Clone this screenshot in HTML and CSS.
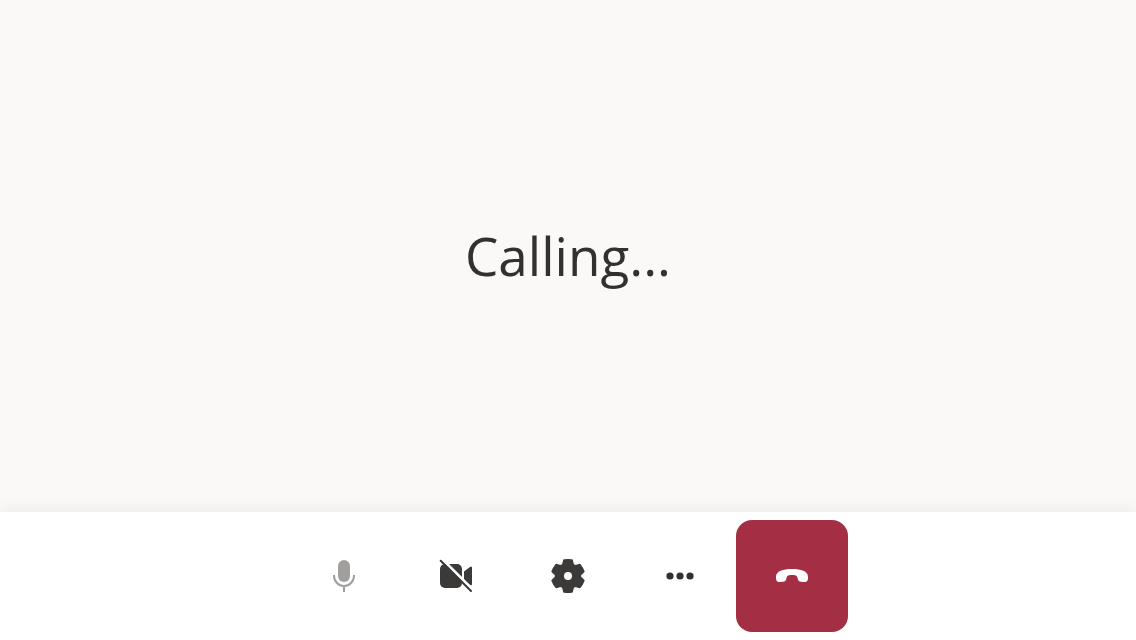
FILE: index.html
```html
<!DOCTYPE html>
<html lang="en">
<head>
<meta charset="utf-8">
<title>Calling</title>
<link rel="stylesheet" href="styles.css">
</head>
<body>
<main class="stage">
  <h1 class="status">Calling...</h1>
</main>
<footer class="controls">
  <button class="control" type="button" aria-label="Microphone" disabled>
    <svg class="icon" viewBox="0 0 48 48"><rect x="18" y="8" width="12" height="22" rx="6" fill="currentColor"/><path d="M14 23v1a10 10 0 0 0 20 0v-1M24 34v6" fill="none" stroke="currentColor" stroke-width="2"/></svg>
  </button>
  <button class="control" type="button" aria-label="Turn camera on">
    <svg class="icon" viewBox="0 0 48 48"><rect x="8" y="12" width="22" height="24" rx="5" fill="currentColor"/><path d="M32 19.5l6-4.600q2-1 2 1v16.200q0 2-2 1l-6-4.600z" fill="currentColor"/><path d="M9.500 6.500l32 32" stroke="#fff" stroke-width="3"/><path d="M8.700 8.700l30.300 30.300" stroke="currentColor" stroke-width="2" stroke-linecap="round"/></svg>
  </button>
  <button class="control" type="button" aria-label="Settings">
    <svg class="icon" viewBox="0 0 48 48">
      <defs><path id="tooth" d="M-6.800-11Q-5.900-11.500-5.600-12.800L-4.900-16Q-4.700-16.700-4-16.800Q0-17.400 4-16.800Q4.700-16.700 4.900-16L5.600-12.800Q5.900-11.500 6.800-11L0 0z"/></defs>
      <g transform="translate(24 24)" fill="currentColor"><circle r="12.400"/><use href="#tooth"/><use href="#tooth" transform="rotate(60)"/><use href="#tooth" transform="rotate(120)"/><use href="#tooth" transform="rotate(180)"/><use href="#tooth" transform="rotate(240)"/><use href="#tooth" transform="rotate(300)"/><circle r="4" fill="#fff"/></g>
    </svg>
  </button>
  <button class="control" type="button" aria-label="More options">
    <svg class="icon icon-more" viewBox="0 0 48 48" fill="currentColor"><circle cx="14" cy="24" r="3.600"/><circle cx="24" cy="24" r="3.600"/><circle cx="34" cy="24" r="3.600"/></svg>
  </button>
  <button class="control hang-up" type="button" aria-label="Leave call">
    <svg class="icon" viewBox="0 0 48 48"><path d="M8 24.500C8 19.300 15 17 24 17s16 2.300 16 7.500v1.700c0 2.500-1.300 3.900-3.400 3.700l-3.900-.2c-1.500-.2-2.300-.9-2.700-2.300l-.8-2.500c-.2-.8-.6-1.300-1.400-1.500-2.400-.6-5.200-.6-7.600 0-.8.2-1.200.7-1.400 1.500L18 27.400c-.4 1.400-1.200 2.100-2.700 2.300l-3.900.2C9.300 30.100 8 28.700 8 26.200z" fill="currentColor"/></svg>
  </button>
</footer>
</body>
</html>
```
FILE: styles.css
```css
* {
  box-sizing: border-box;
}

body {
  margin: 0;
  min-height: 100vh;
  display: flex;
  flex-direction: column;
  background: #faf9f8;
  color: #323130;
  font-family: "Segoe UI", "Open Sans", "Noto Sans", sans-serif;
}

.stage {
  flex: 1;
  display: flex;
  align-items: center;
  justify-content: center;
}

.status {
  margin: 0;
  font-size: 53px;
  line-height: 72px;
  font-weight: 400;
}

.controls {
  display: flex;
  justify-content: center;
  padding: 8px;
  background: #fff;
  box-shadow: 0 0 16px rgba(0, 0, 0, 0.08);
}

.control {
  display: flex;
  align-items: center;
  justify-content: center;
  width: 112px;
  height: 112px;
  padding: 0;
  border: 0;
  border-radius: 16px;
  background: transparent;
  color: #3b3a39;
}

.control:disabled {
  color: #a19f9d;
}

.hang-up {
  background: #a42e43;
  color: #fff;
}

.icon {
  width: 48px;
  height: 48px;
}

.icon-more {
  color: #323130;
}
```
